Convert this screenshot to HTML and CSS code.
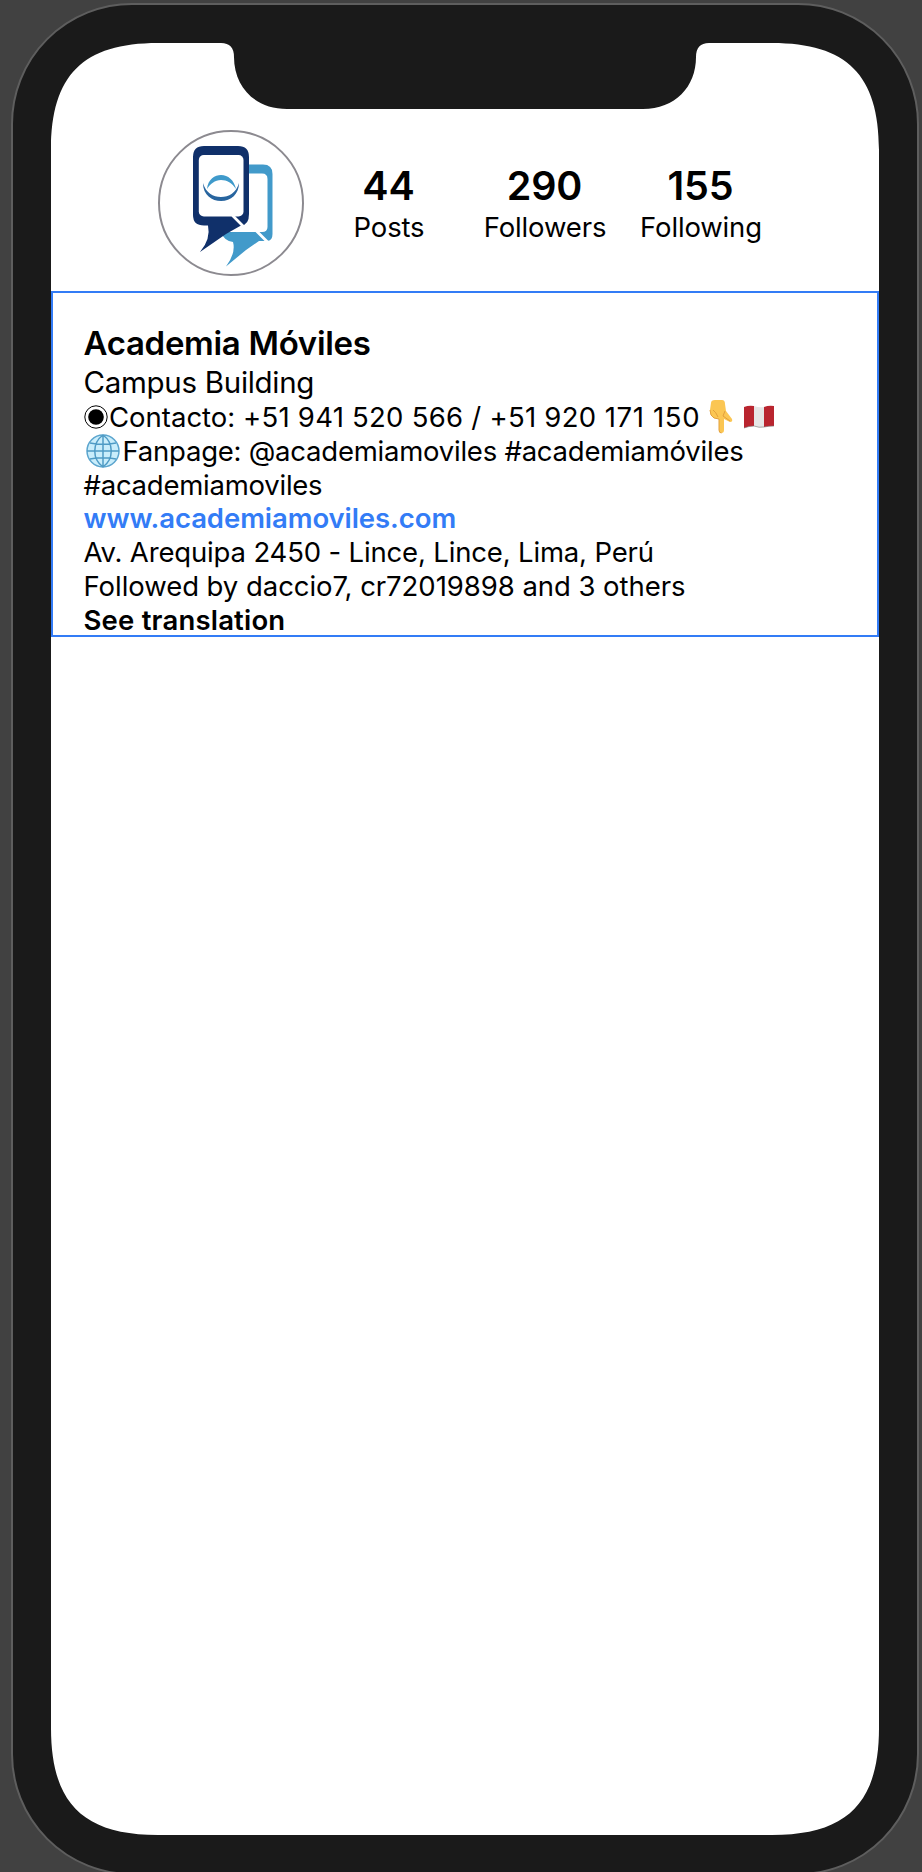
FILE: index.html
```html
<!DOCTYPE html>
<html lang="es">
<head>
<meta charset="utf-8">
<title>Academia Móviles</title>
<link rel="stylesheet" href="styles.css">
</head>
<body>
<div class="device">
  <main class="screen">
    <header class="profile">
      <div class="avatar">
        <svg viewBox="0 0 160 165" width="160" height="165">
          <path d="M98 44.500H113Q122.500 44.500 122.500 54V114Q122.500 121 117 121H109L96 130L76 146.500Q86 133 83 122Q74 121 71 112V60Z" fill="#429aca"/>
          <path d="M90 53.500H112Q117.500 53.500 117.500 59V107Q117.500 112 112 112H75L90 100Z" fill="#fff"/>
          <path d="M54 26H88Q99 26 99 37V94Q99 105 91 105.500L76 114L50 132Q61 119 58 105.500H54Q43 105.500 43 95V37Q43 26 54 26Z" fill="#10306a"/>
          <rect x="48.800" y="35" width="44.700" height="61.500" rx="5" fill="#fff"/>
          <path d="M82.500 95.500L94 107M106 110.500L118 122.500" fill="none" stroke="#fff" stroke-width="2.800"/>
          <path d="M57 69C58 59 65 55 71 55C78 55 84 60 86 69C82 63 77 60 71 60C65 60 60 64 57 69Z" fill="#3f9acb"/>
          <path d="M53 63C53 75 62 81 71 81C81 81 89 74 89 63C86 73 79 77 71 77C63 77 56 73 53 63Z" fill="#28659f"/>
        </svg>
      </div>
      <div class="stat posts"><b>44</b><span>Posts</span></div>
      <div class="stat followers"><b>290</b><span>Followers</span></div>
      <div class="stat following"><b>155</b><span>Following</span></div>
    </header>
    <section class="bio">
      <h1>Academia Móviles</h1>
      <p class="category">Campus Building</p>
      <p class="contact"><svg class="dot" viewBox="0 0 24 24"><circle cx="12" cy="12" r="11.200" fill="none" stroke="#000" stroke-width="1"/><circle cx="12" cy="12" r="7.800"/></svg><span><span class="label">Contacto: </span>+51 941 520 566 / +51 920<span class="last"> 171 150</span></span><svg class="hand" viewBox="0 0 24 36"><path d="M2 4Q2 1 6 1H13Q16 1 16 5L17 12L23 20Q24 23 21 23L15 20V31Q15 34 12.500 34Q10 34 10 31V20L5 19Q1 17 1 11Z" fill="#fbc653"/><path d="M1 11Q1 17 5 19L10 20V31Q10 34 12.500 34M4 11Q7 13 9 18M16 12L14 17L21 22" fill="none" stroke="#e3a03c" stroke-width="1"/></svg><svg class="flag" viewBox="0 0 32 24"><path d="M1 2Q6 0 11 1V21Q6 21 1 23Z" fill="#b9252f"/><path d="M11 1Q16 3 21 2V22Q16 23 11 21Z" fill="#e6e6e6"/><path d="M21 2Q26 0 31 1V21Q26 21 21 22Z" fill="#b9252f"/><path d="M1 23Q6 21 11 21Q16 23 21 22Q26 21 31 21" fill="none" stroke="#777" stroke-width=".6"/></svg></p>
      <p class="fanpage"><svg class="globe" viewBox="0 0 34 34"><circle cx="17" cy="17" r="16" fill="#c9edfb" stroke="#5ba5ce" stroke-width="1.500"/><path d="M17 1V33M1 17H33M4 9Q17 11.500 30 9M4 25Q17 22.500 30 25M17 1C6 9 6 25 17 33M17 1C28 9 28 25 17 33" fill="none" stroke="#4f9bc5" stroke-width="1.500"/></svg><span>Fanpage: @academiamoviles #academiamóviles</span></p>
      <p class="tag">#academiamoviles</p>
      <p class="link">www.academiamoviles.com</p>
      <p class="address">Av. Arequipa 2450 - Lince, Lince, Lima, Perú</p>
      <p class="mutual">Followed by daccio7, cr72019898 and 3 others</p>
      <p class="translate">See translation</p>
    </section>
  </main>
</div>
</body>
</html>
```
FILE: styles.css
```css
* { box-sizing: border-box; }
body { margin: 0; height: 1872px; overflow: hidden; background: #414141; font-family: Inter, sans-serif; color: #000; }
.device { width: 908px; height: 1872px; margin: 3px 0 0 11px; padding: 38px; border: 2px solid #5e5e5e; border-radius: 121px; background: #1a1a1a; }
/* Continuous-curvature corners with the sensor notch cut from the top edge */
.screen {
  width: 828px; height: 1792px; background: #fff;
  clip-path: path("M107 0H170Q183 0 183 14C183 44 204 66 236 66H592C624 66 645 44 645 14Q645 0 658 0H721C796 0 828 32 828 107V1685C828 1760 796 1792 721 1792H107C32 1792 0 1760 0 1685V107C0 32 32 0 107 0Z");
}
.profile { display: flex; height: 248px; padding: 87px 0 0 107px; }
.avatar { width: 146px; height: 146px; border: 2px solid #8c8a90; border-radius: 50%; overflow: hidden; }
.avatar svg { display: block; margin: -12px 0 0 -10px; }
.stat { display: flex; flex-direction: column; align-items: center; width: 156px; padding-top: 32px; font-size: 27.5px; line-height: 34px; letter-spacing: -0.15px; }
.stat b { margin-right: 1px; font-size: 39.5px; font-weight: 600; line-height: 48px; }
.posts { margin-left: 7px; }
.bio { height: 346px; padding: 29px 31px 0 30.5px; border: 2px solid #337cf6; }
.bio h1, .bio p { display: flex; align-items: center; height: 34px; margin: 0; font-size: 27.5px; font-weight: 400; line-height: 34px; white-space: pre; }
.bio h1 { height: 42px; font-size: 33px; line-height: 42px; padding-bottom: 1px; font-weight: 600; letter-spacing: -0.3px; }
.bio .category { height: 36px; font-size: 29.5px; letter-spacing: -0.3px; }
.bio .contact { letter-spacing: 0.26px; }
.contact .label { letter-spacing: 0; }
.contact .last { letter-spacing: 0.65px; }
.bio .fanpage { letter-spacing: -0.23px; }
.bio .tag { height: 33px; letter-spacing: -0.24px; }
.bio .link, .bio .translate { font-weight: 600; }
.bio .link { color: #337cf6; letter-spacing: -0.07px; }
.bio .address { letter-spacing: -0.16px; }
.bio .mutual { letter-spacing: -0.05px; }
.bio .translate { letter-spacing: 0.2px; }
.dot { width: 24px; height: 24px; margin-right: 1.5px; }
.hand { width: 24px; height: 36px; margin-left: 9px; }
.flag { width: 32px; height: 24px; margin-left: 10px; }
.globe { width: 34px; height: 34px; margin: 0 3px 0 2px; }
```
